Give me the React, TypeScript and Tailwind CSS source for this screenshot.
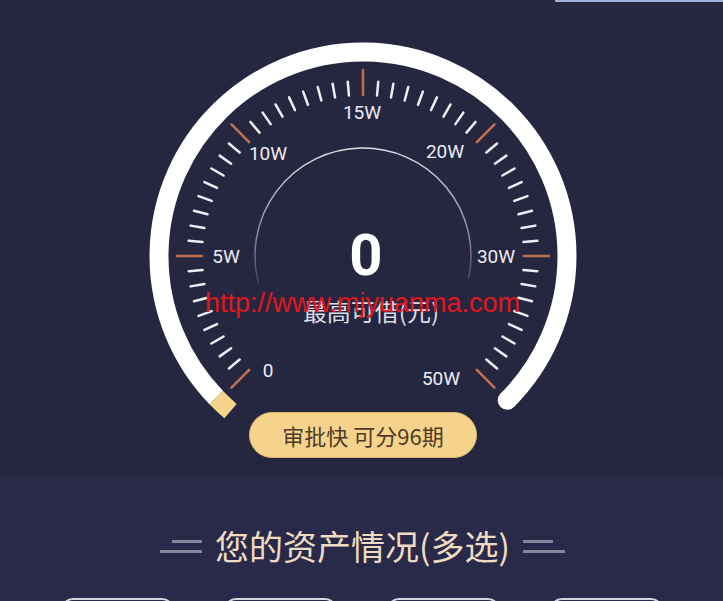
import React from "react";

const CX = 363;
const CY = 256;

function pt(r: number, a: number): [number, number] {
  const t = (a * Math.PI) / 180;
  return [CX + r * Math.sin(t), CY - r * Math.cos(t)];
}

function arc(r: number, a1: number, a2: number) {
  const [x1, y1] = pt(r, a1);
  const [x2, y2] = pt(r, a2);
  const large = a2 - a1 > 180 ? 1 : 0;
  return `M${x1} ${y1} A${r} ${r} 0 ${large} 1 ${x2} ${y2}`;
}

const labels = [
  { t: "0", x: 268, y: 370 },
  { t: "5W", x: 226, y: 256 },
  { t: "10W", x: 268, y: 153 },
  { t: "15W", x: 362, y: 112 },
  { t: "20W", x: 445, y: 151 },
  { t: "30W", x: 496, y: 256 },
  { t: "50W", x: 441, y: 378 },
];

function Gauge() {
  const ticks = Array.from({ length: 55 }, (_, i) => {
    const a = -135 + i * 5;
    const major = i % 9 === 0;
    const [x1, y1] = pt(161, a);
    const [x2, y2] = pt(major ? 186 : 175, a);
    return (
      <line
        key={i}
        x1={x1}
        y1={y1}
        x2={x2}
        y2={y2}
        stroke={major ? "#c2714e" : "#eeeef4"}
        strokeWidth={2.5}
        strokeLinecap="round"
      />
    );
  });
  const [ex, ey] = pt(204, 135);

  return (
    <svg className="absolute inset-0" width={723} height={478} viewBox="0 0 723 478">
      <defs>
        <linearGradient id="fade" x1="0" y1="147" x2="0" y2="300" gradientUnits="userSpaceOnUse">
          <stop offset="0" stopColor="#ffffff" stopOpacity="0.85" />
          <stop offset="0.6" stopColor="#ffffff" stopOpacity="0.45" />
          <stop offset="1" stopColor="#ffffff" stopOpacity="0" />
        </linearGradient>
      </defs>
      <path d={arc(204, -134, 135)} fill="none" stroke="#ffffff" strokeWidth={19} />
      <circle cx={ex} cy={ey} r={9.5} fill="#ffffff" />
      <path d={arc(204, -139.5, -134)} fill="none" stroke="#f4d38b" strokeWidth={19} />
      {ticks}
      <path d={arc(108, -105, 102)} fill="none" stroke="url(#fade)" strokeWidth={1.5} />
      {labels.map((l) => (
        <text
          key={l.t}
          x={l.x}
          y={l.y}
          textAnchor="middle"
          dominantBaseline="central"
          fill="#ececf2"
          fontSize={19}
          style={{ fontFamily: "Roboto, 'Liberation Sans', sans-serif" }}
        >
          {l.t}
        </text>
      ))}
    </svg>
  );
}

export default function App() {
  return (
    <div className="h-[601px] w-[723px] overflow-hidden bg-[#29294a] font-['Noto_Sans_CJK_SC',sans-serif]">
      <div className="relative h-[478px] bg-[#252741]">
        <div className="h-[2px] w-[168px] ml-auto bg-[#9fb0da]" />
        <Gauge />
        <div className="relative flex flex-col items-center pt-[224px] pl-[3px]">
          <div className="ml-[6px] text-[58px] leading-none font-bold text-white font-['Roboto',sans-serif]">
            0
          </div>
          <div className="mt-[15px] ml-[16px] text-[24px] leading-none text-[#dcdce4]">最高可借(元)</div>
          <div className="mt-[89px] flex h-[46px] w-[228px] items-center justify-center rounded-full border border-[#e2b86c] bg-[#f6d38c] text-[22px] text-[#4b3b28]">
            审批快 可分96期
          </div>
        </div>
        <span className="absolute left-[205px] top-[290px] text-[27px] leading-none text-[#e3161d] font-['Liberation_Sans',sans-serif]">
          http://www.mjyuanma.com
        </span>
      </div>
      <div className="pt-[51px]">
        <div className="flex items-center justify-center pl-[2px]">
          <div className="flex flex-col items-end gap-[7px]">
            <div className="h-[3px] w-[30px] bg-[#85859c]" />
            <div className="h-[3px] w-[42px] bg-[#85859c]" />
          </div>
          <div className="mx-[13px] text-[34px] leading-none text-[#efdcc0]">您的资产情况(多选)</div>
          <div className="flex flex-col items-start gap-[7px]">
            <div className="h-[3px] w-[30px] bg-[#85859c]" />
            <div className="h-[3px] w-[42px] bg-[#85859c]" />
          </div>
        </div>
        <div className="mt-[35px] flex justify-center gap-[50px]">
          {[0, 1, 2, 3].map((i) => (
            <div key={i} className="h-[60px] w-[113px] rounded-xl border-2 border-[#d5d5de]" />
          ))}
        </div>
      </div>
    </div>
  );
}
